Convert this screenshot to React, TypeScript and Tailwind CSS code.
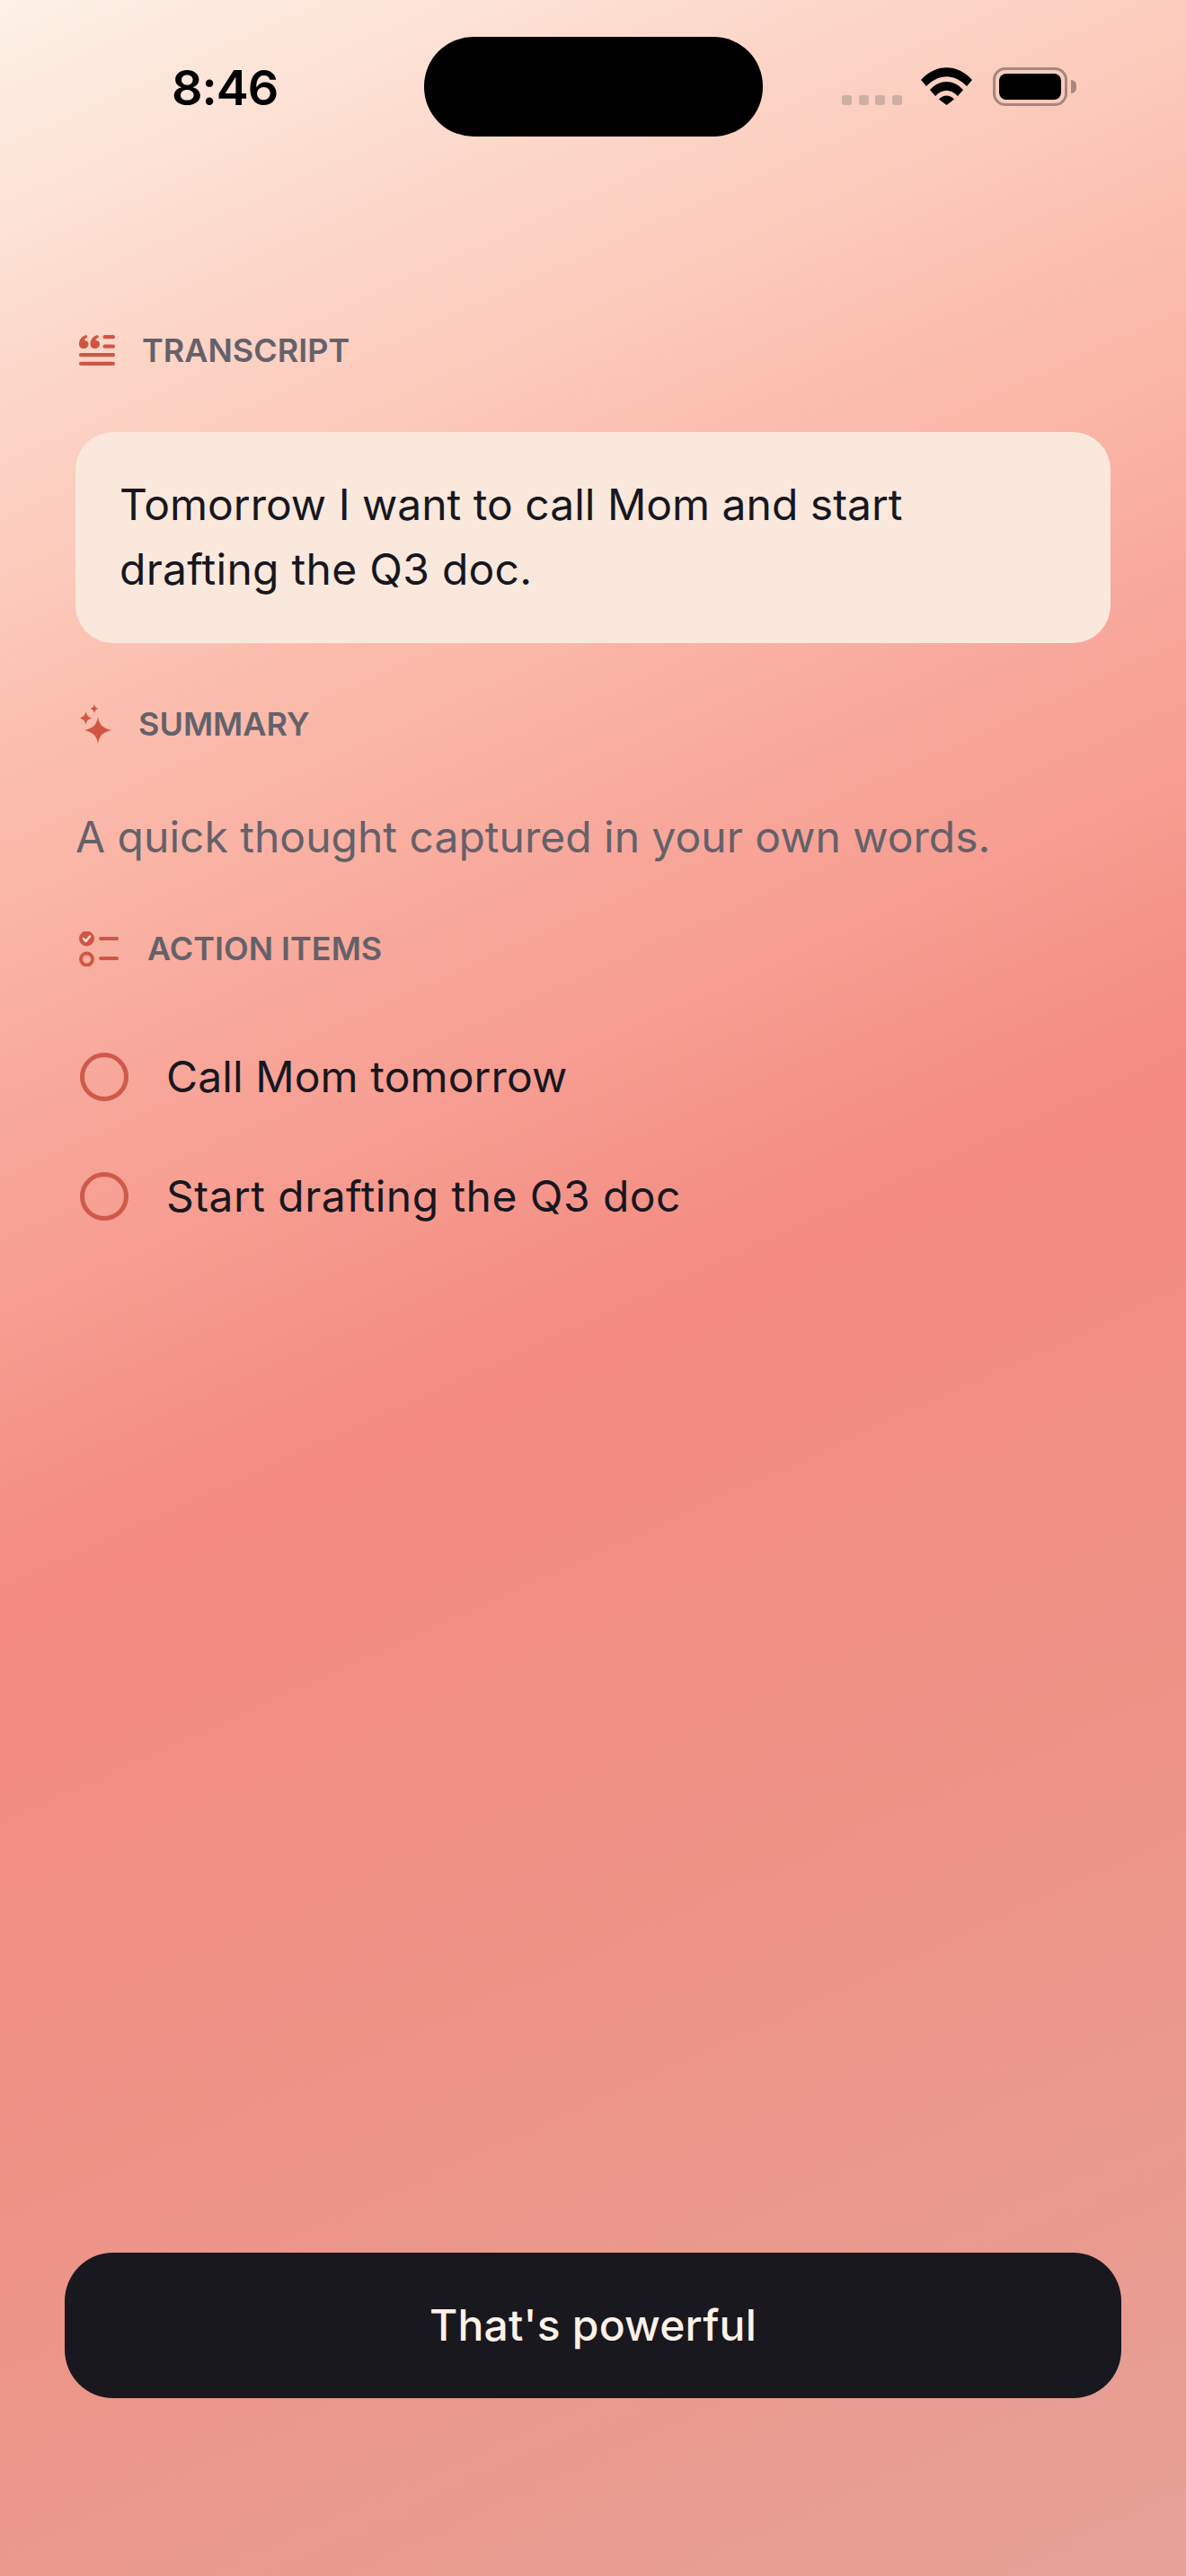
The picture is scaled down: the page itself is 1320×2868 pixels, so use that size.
function Wifi() {
  return (
    <svg width="57" height="42" viewBox="0 0 57 42" fill="#000">
      <path d="M0 14 C16 -4.500 41 -4.500 57 14 L51 21 C37 6.500 20 6.500 6 21 Z" />
      <path d="M10 25 C21 13 36 13 47 25 L41 32 C33 23.500 24 23.500 16 32 Z" />
      <path d="M20 35.500 C25 30 32 30 37 35.500 L28.500 42 Z" />
    </svg>
  );
}

function QuoteLines() {
  return (
    <svg width="40" height="34" viewBox="0 0 40 34" fill="#cf5643">
      <path d="M0 10 C0 5 3 1 8.500 0 L9.500 2.500 C7 3.500 6 5 6 6 C8.500 6 10.500 7.500 10.500 10 C10.500 13 8 15 5.500 15 C2 15 0 13 0 10 Z" />
      <path d="M12.500 10 C12.500 5 15.500 1 21 0 L22 2.500 C19.500 3.500 18.500 5 18.500 6 C21 6 23 7.500 23 10 C23 13 20.500 15 18 15 C14.500 15 12.500 13 12.500 10 Z" />
      <rect x="26.500" y="0" width="13.500" height="4.300" rx="2.100" />
      <rect x="26.500" y="10.500" width="13.500" height="4.300" rx="2.100" />
      <rect x="0" y="20" width="40" height="4.300" rx="2.100" />
      <rect x="0" y="29.700" width="40" height="4.300" rx="2.100" />
    </svg>
  );
}

function Sparkles() {
  return (
    <svg width="36" height="44" viewBox="0 0 36 44" fill="#cf5643">
      <path d="M21 14 C22.500 23 26 26.500 36 29 C26 31.500 22.500 35 21 44 C19.500 35 16 31.500 6 29 C16 26.500 19.500 23 21 14 Z" />
      <path d="M7.500 8 C8.300 12.500 10.500 14.700 15 15.500 C10.500 16.300 8.300 18.500 7.500 23 C6.700 18.500 4.500 16.300 0 15.500 C4.500 14.700 6.700 12.500 7.500 8 Z" />
      <path d="M17 0 C17.600 3 19 4.400 22 5 C19 5.600 17.600 7 17 10 C16.400 7 15 5.600 12 5 C15 4.400 16.400 3 17 0 Z" />
    </svg>
  );
}

function Checklist() {
  return (
    <svg width="44" height="39" viewBox="0 0 44 39">
      <circle cx="8.500" cy="8" r="8.500" fill="#cf5643" />
      <path d="M5 8 L7.500 11 L12 5.500" fill="none" stroke="#fde8dc" strokeWidth="2.400" strokeLinecap="round" strokeLinejoin="round" />
      <circle cx="8.500" cy="31" r="6.500" fill="none" stroke="#cf5643" strokeWidth="3.800" />
      <rect x="22" y="6" width="22" height="4" rx="2" fill="#cf5643" />
      <rect x="22" y="28" width="22" height="4" rx="2" fill="#cf5643" />
    </svg>
  );
}

function SectionLabel({ icon, text, gap }: { icon: React.ReactNode; text: string; gap: string }) {
  return (
    <div className={`flex h-12 items-center ${gap} pl-[4px]`}>
      {icon}
      <span className="text-[36px] font-semibold text-[#64616a]">{text}</span>
    </div>
  );
}

function ActionItem({ text, tracking }: { text: string; tracking: string }) {
  return (
    <div className="flex h-[54px] items-center gap-[42px] pl-[5px]">
      <div className="h-[54px] w-[54px] rounded-full border-[5px] border-[#cf5a49]" />
      <span className={`text-[48px] leading-[72px] text-[#17171f] ${tracking}`}>{text}</span>
    </div>
  );
}

export default function App() {
  return (
    <div
      className="flex h-[2868px] w-[1320px] flex-col overflow-hidden font-['Inter',sans-serif]"
      style={{
        background:
          "linear-gradient(155.6deg, #fdf1e6 0%, #fcdccf 10%, #fbbfaf 24%, #f48a80 52%, #ee9387 72%, #e6a196 100%)",
      }}
    >
      {/* status bar */}
      <div className="relative h-[366px] shrink-0">
        <span className="absolute left-[191px] top-[68px] text-[54px] font-semibold leading-[60px] tracking-[-1px] text-black">
          8:46
        </span>
        <div className="absolute left-[472px] top-[41px] h-[111px] w-[377px] rounded-[55px] bg-black" />
        <div className="absolute left-[937px] top-[106px] flex gap-[7.500px]">
          <div className="h-[11px] w-[11px] rounded-[3px] bg-[#cfaea3]" />
          <div className="h-[11px] w-[11px] rounded-[3px] bg-[#cfaea3]" />
          <div className="h-[11px] w-[11px] rounded-[3px] bg-[#cfaea3]" />
          <div className="h-[11px] w-[11px] rounded-[3px] bg-[#cfaea3]" />
        </div>
        <div className="absolute left-[1025px] top-[75px]">
          <Wifi />
        </div>
        <div className="absolute left-[1105px] top-[75px] flex items-center gap-[4px]">
          <div className="h-[43px] w-[83px] rounded-[14px] border-[3px] border-[#a5877e] p-[4px]">
            <div className="h-full w-full rounded-[8px] bg-black" />
          </div>
          <div className="h-[15px] w-[6px] rounded-r-full bg-[#a5877e]" />
        </div>
      </div>

      <div className="flex flex-col px-[84px]">
        <SectionLabel icon={<QuoteLines />} text="TRANSCRIPT" gap="gap-[30px]" />

        <div className="mt-[67px] h-[235px] rounded-[42px] bg-[#fae8dc] px-[49px] py-[45px] text-[48px] leading-[72px] text-[#17171f]">
          Tomorrow I want to call Mom and start <span className="tracking-[0.27px]">drafting the Q3 doc.</span>
        </div>

        <div className="mt-[66px]">
          <SectionLabel icon={<Sparkles />} text="SUMMARY" gap="gap-[30px]" />
        </div>

        <p className="mt-[66px] text-[48px] leading-[72px] text-[#64616a]">
          A quick thought captured in your own words.
        </p>

        <div className="mt-[64px]">
          <SectionLabel icon={<Checklist />} text="ACTION ITEMS" gap="gap-[32px]" />
        </div>

        <div className="mt-[92px] flex flex-col gap-[79px]">
          <ActionItem text="Call Mom tomorrow" tracking="tracking-[0.1px]" />
          <ActionItem text="Start drafting the Q3 doc" tracking="tracking-[0.44px]" />
        </div>
      </div>

      <div className="mt-auto px-[72px] pb-[198px]">
        <button className="flex h-[162px] w-full items-center justify-center rounded-[54px] bg-[#19181f] text-[48px] font-medium tracking-[0.2px] text-[#fdf1e8]">
          That's powerful
        </button>
      </div>
    </div>
  );
}
